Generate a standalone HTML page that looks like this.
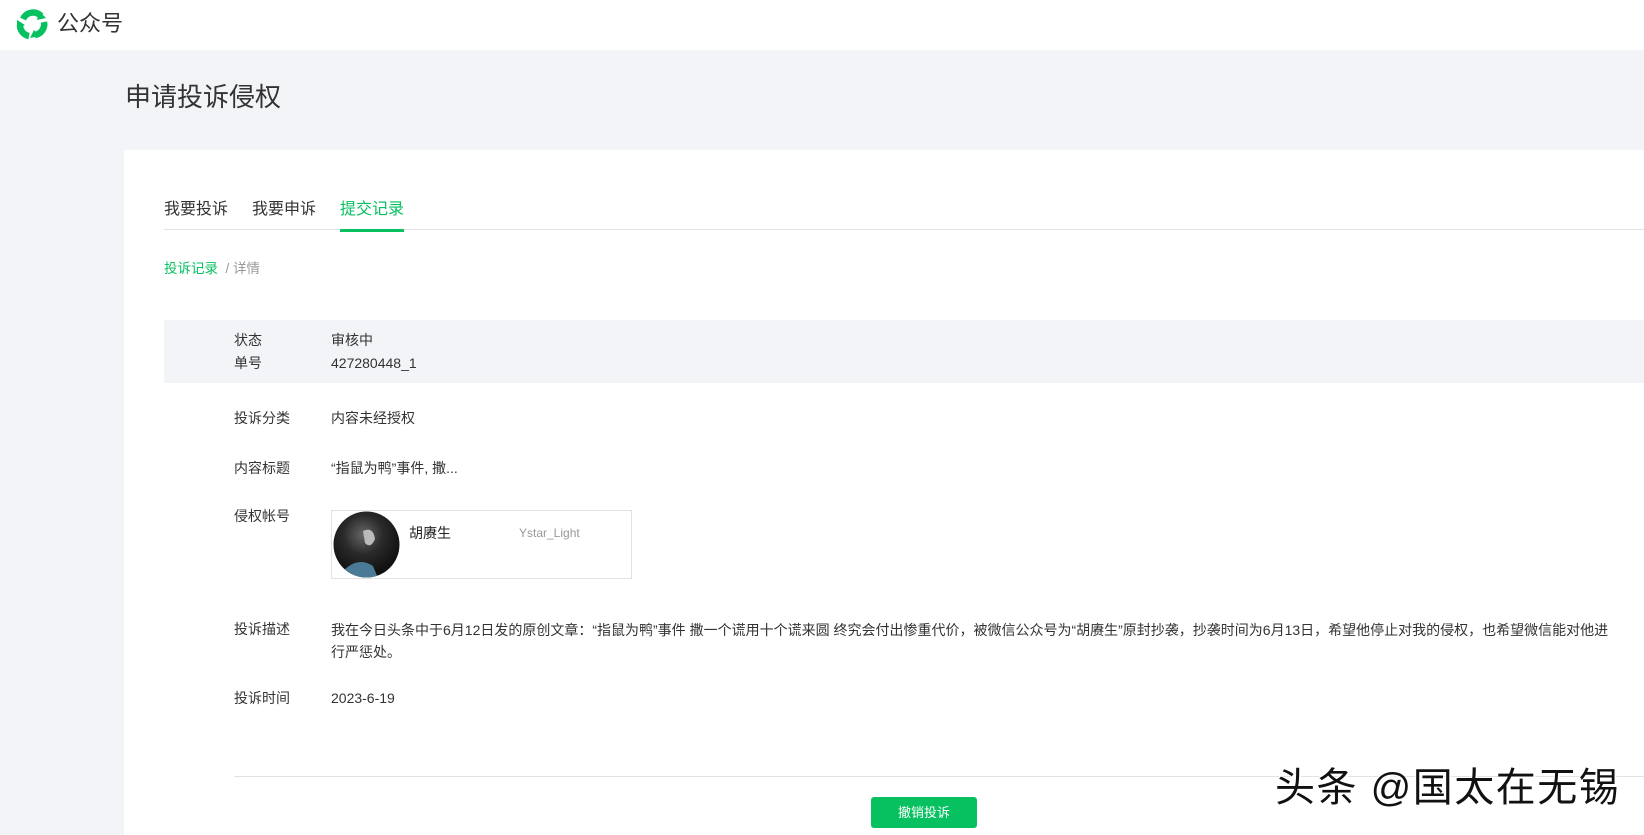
<!DOCTYPE html>
<html><head><meta charset="utf-8"><style>
*{margin:0;padding:0;box-sizing:border-box}
body{width:1644px;height:835px;overflow:hidden;background:#f3f4f7;font-family:"Liberation Sans","Noto Sans CJK SC",sans-serif;color:#333;position:relative}
.hd{position:absolute;left:0;top:0;width:1644px;height:50px;background:#fff}
.abs{position:absolute;white-space:nowrap}
.panel{position:absolute;left:124px;top:150px;right:0;bottom:0;background:#fff}
.lbl{position:absolute;left:234px;font-size:14px;color:#333;white-space:nowrap;line-height:20px}
.val{position:absolute;left:331px;font-size:14px;color:#333;white-space:nowrap;line-height:20px}
</style></head><body>
<div class="hd"></div>
<svg class="abs" style="left:15px;top:7px" width="34" height="34" viewBox="0 0 34 34">
<g fill="none" stroke="#07c160" stroke-width="6.5">
<path d="M8 12 A11 11 0 0 1 26 9"/>
<path d="M29 15 A11 11 0 0 1 20 28"/>
<path d="M14 29 A11 11 0 0 1 5 18"/>
</g>
<path d="M24 4 L31 11 L22 13Z" fill="#07c160"/>
<path d="M25 29 L15 31 L19 23Z" fill="#07c160"/>
<path d="M2 13 L10 18 L2 22Z" fill="#07c160"/>
</svg>
<div class="abs" style="left:57px;top:9px;font-size:22px;color:#333;line-height:30px">公众号</div>
<div class="abs" style="left:125px;top:80px;font-size:26px;color:#333;line-height:34px">申请投诉侵权</div>
<div class="panel"></div>
<div class="abs" style="left:164px;top:229px;right:0;height:1px;background:#e2e2e2"></div>
<div class="abs" style="left:164px;top:199px;font-size:16px;color:#333;line-height:22px">我要投诉</div>
<div class="abs" style="left:252px;top:199px;font-size:16px;color:#333;line-height:22px">我要申诉</div>
<div class="abs" style="left:340px;top:199px;font-size:16px;color:#07c160;line-height:22px">提交记录</div>
<div class="abs" style="left:340px;top:229px;width:64px;height:3px;background:#07c160"></div>
<div class="abs" style="left:164px;top:259px;font-size:13.5px;line-height:20px"><span style="color:#07c160">投诉记录</span><span style="color:#999"> &nbsp;/ 详情</span></div>
<div class="abs" style="left:164px;top:320px;right:0;height:63px;background:#f3f4f7"></div>
<div class="lbl" style="top:330px">状态</div><div class="val" style="top:330px">审核中</div>
<div class="lbl" style="top:353px">单号</div><div class="val" style="top:353px">427280448_1</div>
<div class="lbl" style="top:408px">投诉分类</div><div class="val" style="top:408px">内容未经授权</div>
<div class="lbl" style="top:458px">内容标题</div><div class="val" style="top:458px">“指鼠为鸭”事件, 撒...</div>
<div class="lbl" style="top:506px">侵权帐号</div>
<div class="abs" style="left:331px;top:510px;width:301px;height:69px;border:1px solid #e2e2e2"></div>
<svg class="abs" style="left:333px;top:511px" width="67" height="67"><defs><radialGradient id="g" cx="45%" cy="35%" r="60%"><stop offset="0" stop-color="#666"/><stop offset=".5" stop-color="#2a2a2a"/><stop offset="1" stop-color="#111"/></radialGradient><clipPath id="c"><circle cx="33.5" cy="33.5" r="33"/></clipPath></defs><circle cx="33.5" cy="33.5" r="33" fill="url(#g)"/><g clip-path="url(#c)"><path d="M10 60 Q25 45 40 55 L45 67 L15 67Z" fill="#4a7a96"/><path d="M30 20 Q40 15 42 28 Q38 38 32 32Z" fill="#bbb"/></g></svg>
<div class="abs" style="left:409px;top:523px;font-size:14px;color:#222;line-height:20px">胡赓生</div>
<div class="abs" style="left:519px;top:523px;font-size:12px;color:#999;line-height:20px">Ystar_Light</div>
<div class="lbl" style="top:619px">投诉描述</div>
<div class="val" style="top:619px;line-height:22px">我在今日头条中于6月12日发的原创文章：“指鼠为鸭”事件 撒一个谎用十个谎来圆 终究会付出惨重代价，被微信公众号为“胡赓生”原封抄袭，抄袭时间为6月13日，希望他停止对我的侵权，也希望微信能对他进<br>行严惩处。</div>
<div class="lbl" style="top:688px">投诉时间</div><div class="val" style="top:688px">2023-6-19</div>
<div class="abs" style="left:234px;top:776px;right:0;height:1px;background:#e2e2e2"></div>
<div class="abs" style="left:871px;top:797px;width:106px;height:31px;background:#07c160;border-radius:3px;color:#fff;font-size:13px;line-height:31px;text-align:center">撤销投诉</div>
<div class="abs" style="left:1275px;top:764px;font-size:40px;color:#111;line-height:48px;letter-spacing:1.5px;text-shadow:2px 2px 0 #fff,-1px -1px 0 #fff">头条 @国太在无锡</div>
</body></html>
